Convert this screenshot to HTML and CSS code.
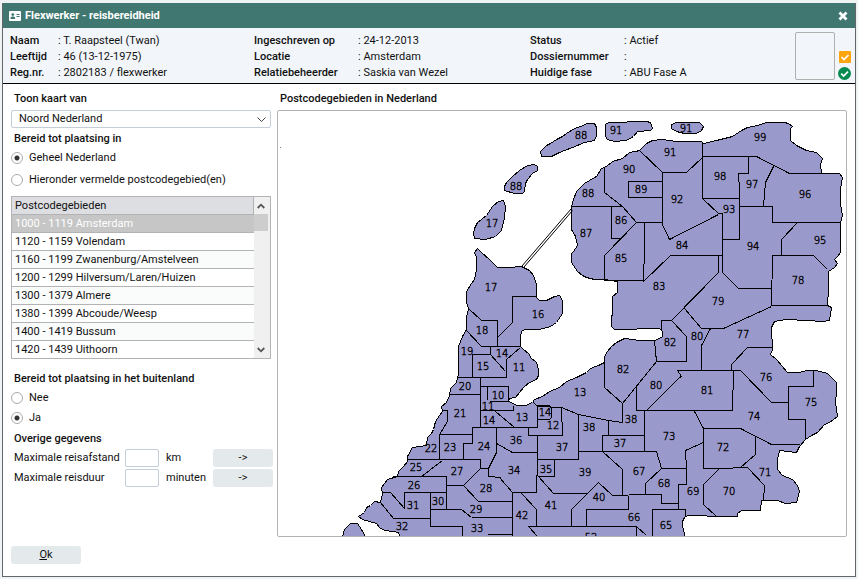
FILE: index.html
```html
<!DOCTYPE html>
<html lang="nl">
<head>
<meta charset="utf-8">
<title>Flexwerker - reisbereidheid</title>
<link rel="stylesheet" href="styles.css">
</head>
<body>
<main class="window">
  <header class="titlebar">
    <svg class="card-icon" viewBox="0 0 12 10" width="12" height="10" aria-hidden="true">
      <rect width="12" height="10" rx="1" fill="#fff"/>
      <circle cx="3.8" cy="3.6" r="1.4" fill="#407871"/>
      <path d="M1.5 8V7q0-1.5 1.5-1.5h1.6q1.5 0 1.5 1.5v1zM7.5 3h3v1h-3zM7.5 5h3v1h-3z" fill="#407871"/>
    </svg>
    <h1>Flexwerker - reisbereidheid</h1>
    <button class="close" type="button" aria-label="Sluiten">
      <svg viewBox="0 0 10 10" width="10" height="10"><path d="M1.5 1.5l7 7M8.5 1.5l-7 7" stroke="#fff" stroke-width="2.8"/></svg>
    </button>
  </header>

  <section class="summary">
    <dl class="facts facts-person">
      <dt>Naam</dt><dd>: T. Raapsteel (Twan)</dd>
      <dt>Leeftijd</dt><dd>: 46 (13-12-1975)</dd>
      <dt>Reg.nr.</dt><dd>: 2802183 / flexwerker</dd>
    </dl>
    <dl class="facts facts-office">
      <dt>Ingeschreven op</dt><dd>: 24-12-2013</dd>
      <dt>Locatie</dt><dd>: Amsterdam</dd>
      <dt>Relatiebeheerder</dt><dd>: Saskia van Wezel</dd>
    </dl>
    <dl class="facts facts-status">
      <dt>Status</dt><dd>: Actief</dd>
      <dt>Dossiernummer</dt><dd>:</dd>
      <dt>Huidige fase</dt><dd>: ABU Fase A</dd>
    </dl>
    <div class="photo"></div>
    <div class="badges">
      <svg viewBox="0 0 12 12" width="12" height="12"><rect width="12" height="12" rx="1" fill="#fda50f"/><path d="M2.5 6l2.500 2.500 4.500-4.500" fill="none" stroke="#fff" stroke-width="1.6"/></svg>
      <svg viewBox="0 0 13 13" width="13" height="13"><circle cx="6.5" cy="6.5" r="6.5" fill="#088a50"/><path d="M3.2 6.600l2.400 2.400 4.400-4.400" fill="none" stroke="#fff" stroke-width="1.7"/></svg>
    </div>
  </section>

  <div class="content">
    <form class="panel">
      <label class="heading" for="kaart">Toon kaart van</label>
      <div class="select-wrap">
        <select id="kaart"><option>Noord Nederland</option></select>
        <svg class="chevron" viewBox="0 0 9 6" width="9" height="6" aria-hidden="true"><path d="M.5 .5l4 4 4-4" fill="none" stroke="#444"/></svg>
      </div>

      <div class="group" role="radiogroup" aria-labelledby="binnenland">
        <h2 class="heading" id="binnenland">Bereid tot plaatsing in</h2>
        <label class="choice"><input type="radio" name="gebied" checked>Geheel Nederland</label>
        <label class="choice choice-area"><input type="radio" name="gebied">Hieronder vermelde postcodegebied(en)</label>
      </div>

      <div class="list">
        <table>
          <thead><tr><th>Postcodegebieden</th></tr></thead>
          <tbody>
            <tr class="selected"><td>1000 - 1119 Amsterdam</td></tr>
            <tr><td>1120 - 1159 Volendam</td></tr>
            <tr><td>1160 - 1199 Zwanenburg/Amstelveen</td></tr>
            <tr><td>1200 - 1299 Hilversum/Laren/Huizen</td></tr>
            <tr><td>1300 - 1379 Almere</td></tr>
            <tr><td>1380 - 1399 Abcoude/Weesp</td></tr>
            <tr><td>1400 - 1419 Bussum</td></tr>
            <tr><td>1420 - 1439 Uithoorn</td></tr>
          </tbody>
        </table>
        <div class="scrollbar">
          <button type="button" aria-label="Omhoog"><svg viewBox="0 0 8 6" width="8" height="6"><path d="M.7 5L4 1.700 7.300 5" fill="none" stroke="#555" stroke-width="1.8"/></svg></button>
          <div class="thumb"></div>
          <button type="button" aria-label="Omlaag"><svg viewBox="0 0 8 6" width="8" height="6"><path d="M.7 1L4 4.300 7.300 1" fill="none" stroke="#555" stroke-width="1.8"/></svg></button>
        </div>
      </div>

      <div class="group" role="radiogroup" aria-labelledby="buitenland">
        <h2 class="heading" id="buitenland">Bereid tot plaatsing in het buitenland</h2>
        <label class="choice"><input type="radio" name="buitenland">Nee</label>
        <label class="choice"><input type="radio" name="buitenland" checked>Ja</label>
      </div>

      <h2 class="heading">Overige gegevens</h2>
      <div class="limit">
        <label for="afstand">Maximale reisafstand</label>
        <input id="afstand" type="text">
        <span>km</span>
        <button class="button" type="button">-&gt;</button>
      </div>
      <div class="limit">
        <label for="duur">Maximale reisduur</label>
        <input id="duur" type="text">
        <span>minuten</span>
        <button class="button" type="button">-&gt;</button>
      </div>
      <button class="button ok" type="button"><u>O</u>k</button>
    </form>

    <section class="map-panel">
      <h2 class="heading">Postcodegebieden in Nederland</h2>
      <div class="map">
        <svg viewBox="278 111 568 425" role="img" aria-label="Postcodegebieden in Nederland">
          <rect x="280" y="147" width="1" height="1" fill="#888"/>
          <g transform="translate(-.5 -.5)">
          <g class="land">
            <!-- islands -->
            <path d="M541 152L547 146L551 144L557 140L563 137L567 134L575 129L581 127L588 124L595 124L597 128L597 136L595 141L585 143L573 148L560 153L552 157L542 157Z"/>
            <path d="M606 125L609 123L620 123L635 122L647 122L651 123L653 129L651 131L638 132L634 137L627 141L615 142L608 140L606 137Z"/>
            <path d="M672 125L677 123L687 123L700 123L704 127L702 131L697 134L685 134L677 132L672 129Z"/>
            <path d="M505 187L507 183L513 177L520 171L528 166L535 165L538 167L538 171L533 174L528 180L526 184L525 192L523 194L515 194L505 191Z"/>
            <path d="M475 229L478 223L487 216L493 207L499 202L504 201L506 207L505 218L502 231L496 237L486 240L475 239L474 234Z"/>
            <path d="M343 537L345 530L351 524L358 524L362 530L366 537"/>
            <!-- mainland -->
            <path d="M475 253L478 249L482 253L490 260L498 268L510 268L522 267L530 271L534 276L537 285L537 298L540 301L547 301L555 297L560 296L563 301L563 314L557 323L551 327L540 330L525 330L522 332L521 337L521 347L523 349L530 355L531 358L537 363L539 370L539 376L537 380L530 383L525 387L520 393L516 398L510 399L509 402L514 404L517 406L526 406L533 403L535 400L543 397L550 392L560 388L567 382L577 378L587 373L590 370L593 368L599 366L605 363L605 357L608 352L612 347L617 343L621 341L625 339L633 340L640 341L655 341L660 339L663 337L663 332L660 329L615 330L612 327L612 317L613 315L613 297L618 293L618 282L605 280L595 280L587 278L583 276L578 272L572 263L572 254L574 252L578 246L576 237L572 230L572 207L574 200L577 192L585 184L590 181L597 177L602 169L607 167L613 162L623 159L630 153L636 152L640 151L647 144L653 141L663 140L677 142L702 142L704 144L717 141L733 137L742 131L748 128L758 126L767 123L785 123L789 124L793 127L791 129L791 141L797 146L807 151L817 153L823 159L821 165L822 174L840 174L843 178L841 190L841 205L843 216L841 223L841 253L838 257L835 260L838 264L835 268L829 272L829 290L828 306L832 308L830 321L823 322L807 321L787 320L775 322L772 328L773 350L771 355L777 360L788 373L800 373L807 371L817 371L828 374L837 383L837 392L836 403L838 417L830 423L825 425L818 433L812 436L806 440L800 447L797 453L780 451L778 460L778 470L783 476L793 480L798 486L800 492L797 503L786 504L778 501L762 501L761 511L742 511L738 514L738 517L715 517L700 516L688 516L685 518L683 522L683 527L686 538L401 538L399 533L393 532L385 531L380 528L377 524L370 522L363 520L359 517L365 513L367 508L371 506L375 502L381 503L383 495L382 488L388 480L398 477L399 472L404 467L408 462L408 457L413 448L420 447L427 446L428 438L432 434L434 430L436 422L440 416L443 412L442 407L447 403L450 396L451 389L457 383L459 375L459 347L463 337L467 330L467 318L469 309L467 303L467 292L472 284L475 280L477 270L477 258Z"/>
          </g>
          <!-- causeway -->
          <path class="causeway" d="M571.5 209.500L522.500 266.500M573 211L524.500 267.500"/>
          <!-- district borders, north -->
          <path class="line" d="M605 168V193L623 207L637 223H663M572 207H623M612 207V239H622M637 223L605 256V281H644M645 223V250L644 281M640 151L663 173H687L703 158M703 143V199L719 214H723M663 182H629V198H663M663 173V225L670 240L719 215M703 157H757L790 174H822M749 157V174H739L740 191V240H723M703 199H740M774 167L766 183L764 207M740 207H773V223H841M798 223L782 240V256M828 270L814 256H773L772 306H829M723 214V273L739 289H772M723 256H671L644 282M719 256V273L672 321H662V330"/>
          <!-- east -->
          <path class="line" d="M672 321L687 337V362H657L655 341M657 362L623 404M685 309L702 329H724L772 307M711 329L702 346V371M741 371H678L682 377L680 378L647 411M732 371V365L748 348H773M741 371L772 403H789M814 371V387H789V420H806V440M734 371L733 411H637V385M605 363V388L623 404V423L609 421L579 415L562 408L538 407L534 403M695 412L704 429V469H720L748 468L765 486L764 501M704 429H741L772 445H800M756 437V455L741 468M720 469L704 485V505L717 517M704 443L686 451L687 469V485H679V510M653 537V510H686V516M645 411V452M579 452H657L662 469H687M662 469L646 484V495M613 496L646 495H662V504H678M603 452L623 470V496"/>
          <!-- centre -->
          <path class="line" d="M613 496L599 483L572 510V527M539 477L554 494H588M629 496V510H587V527M538 537L529 527H637V537M637 527L647 536M538 405V428M538 406H550L552 408V418L550 420H538M562 408L563 436H529V428M538 436V460L537 493M538 460H579V415M555 460V477H538M645 436H603V452M609 421V436M500 478L513 493H537M513 493V537M522 494L537 510V527M514 406V411H481M481 378V428M481 387H509V402H490M488 387V400M496 412L515 428M464 460V444H473V428H538M497 428V453L489 469V477L502 478M497 444L513 453H538M473 435V444M440 460V435H473M440 435L448 422V411H443M450 395H481M408 460H481V469H489M443 461L422 477M393 477H447V510M447 486H464L481 469M464 486L479 502H513M472 518H513"/>
          <!-- west -->
          <path class="line" d="M383 493H391L405 509V493H447M431 493V527H463V537M431 510H462L472 518M381 503L394 519H431M537 297H513V323L498 338M469 309L482 321H498V347M467 331L482 347H521M491 347V355H473V378M458 378H507V360L521 348M491 355L506 372M488 535H513"/>
          </g>
          <g class="codes">
            <text x="581" y="139">88</text><text x="616" y="134">91</text><text x="686" y="132">91</text><text x="760" y="141">99</text><text x="670" y="156">91</text><text x="629" y="173">90</text><text x="641" y="193">89</text><text x="516" y="190">88</text><text x="588" y="197">88</text><text x="720" y="180">98</text><text x="752" y="188">97</text><text x="805" y="198">96</text><text x="677" y="203">92</text><text x="729" y="213">93</text><text x="492" y="227">17</text><text x="586" y="237">87</text><text x="621" y="224">86</text><text x="682" y="249">84</text><text x="753" y="250">94</text><text x="820" y="244">95</text><text x="621" y="262">85</text><text x="659" y="290">83</text><text x="718" y="305">79</text><text x="798" y="284">78</text><text x="491" y="291">17</text><text x="538" y="318">16</text><text x="482" y="334">18</text><text x="670" y="346">82</text><text x="697" y="340">80</text><text x="743" y="338">77</text><text x="467" y="355">19</text><text x="502" y="357">14</text><text x="483" y="370">15</text><text x="519" y="371">11</text><text x="623" y="373">82</text><text x="656" y="389">80</text><text x="707" y="394">81</text><text x="766" y="381">76</text><text x="811" y="406">75</text><text x="465" y="390">20</text><text x="498" y="399">10</text><text x="488" y="410">11</text><text x="580" y="396">13</text><text x="460" y="417">21</text><text x="489" y="424">14</text><text x="522" y="421">13</text><text x="545" y="416">14</text><text x="553" y="429">12</text><text x="589" y="431">38</text><text x="631" y="423">38</text><text x="754" y="420">74</text><text x="431" y="452">22</text><text x="450" y="451">23</text><text x="484" y="450">24</text><text x="516" y="444">36</text><text x="562" y="451">37</text><text x="620" y="447">37</text><text x="669" y="440">73</text><text x="723" y="451">72</text><text x="416" y="471">25</text><text x="457" y="475">27</text><text x="514" y="474">34</text><text x="546" y="473">35</text><text x="585" y="476">39</text><text x="639" y="475">67</text><text x="664" y="487">68</text><text x="765" y="476">71</text><text x="414" y="489">26</text><text x="486" y="492">28</text><text x="438" y="505">30</text><text x="413" y="509">31</text><text x="476" y="513">29</text><text x="599" y="501">40</text><text x="551" y="509">41</text><text x="634" y="521">66</text><text x="666" y="529">65</text><text x="693" y="495">69</text><text x="729" y="495">70</text><text x="402" y="530">32</text><text x="477" y="532">33</text><text x="522" y="519">42</text><text x="591" y="541">52</text>
          </g>
        </svg>
      </div>
    </section>
  </div>
</main>
</body>
</html>
```
FILE: styles.css
```css
* { box-sizing: border-box; }

body {
  margin: 0;
  padding: 3px 2px;
  background: #f0f3f4;
  color: #111;
  font: 11px/16px Roboto, "Liberation Sans", sans-serif;
}

h1, h2, dl, dd { margin: 0; }
button, input, select { font: inherit; color: inherit; }
svg { display: block; }

.window {
  border: 1px solid #63666a;
  border-top: 0;
  background: #fff;
}

.titlebar {
  display: flex;
  align-items: center;
  gap: 4px;
  height: 25px;
  padding: 0 7px 0 6px;
  background: #407871;
  color: #fff;
}
.titlebar h1 { flex: 1; font-size: 11px; font-weight: 700; }
.close { padding: 0; border: 0; background: none; }

.summary {
  display: flex;
  align-items: flex-start;
  padding: 4px 4px 3px 7px;
  border-bottom: 1px solid #000;
  background: #f2f6fa;
}
.facts { display: grid; padding-top: 1px; margin-bottom: -1px; }
.facts dt { font-weight: 500; }
.facts-person { grid-template-columns: 48px 196px; }
.facts-office { grid-template-columns: 104px 172px; }
.facts-status { grid-template-columns: 94px 1fr; flex: 1; }
.photo {
  width: 40px;
  height: 48px;
  border: 1px solid #b0b0b0;
  border-radius: 2px;
}
.badges {
  display: grid;
  gap: 4px;
  justify-items: center;
  align-self: flex-end;
  margin-left: 3px;
}

.content {
  display: grid;
  grid-template-columns: 262px minmax(0, 1fr);
  gap: 4px;
  padding: 4px 8px 12px;
}
.heading {
  display: block;
  padding: 2px 0 0 3px;
  font-size: 11px;
  font-weight: 500;
  line-height: 18px;
}

.select-wrap { position: relative; margin: 2px 2px 0 0; }
.select-wrap select {
  display: block;
  width: 100%;
  height: 18px;
  padding: 0 7px;
  border: 1px solid #c3ced8;
  border-radius: 2px;
  background: #fff;
  appearance: none;
}
.chevron { position: absolute; right: 5px; top: 7px; pointer-events: none; }

.choice {
  display: flex;
  align-items: center;
  gap: 6px;
  height: 20px;
}
.choice-area { margin-top: 2px; }
.choice input {
  width: 12px;
  height: 12px;
  margin: 0;
  border: 1px solid #aaa;
  border-radius: 50%;
  background: #fff;
  appearance: none;
}
.choice input:checked { background: radial-gradient(circle, #333 0 2px, #fff 3px); }

.list {
  display: flex;
  margin: 6px 2px 9px 0;
  border: 1px solid #b3b3b5;
}
.list table { flex: 1; border-collapse: separate; border-spacing: 0; }
.list th, .list td {
  height: 18px;
  padding: 0 3px;
  border-bottom: 1px solid #b3b3b5;
  font-weight: 400;
  line-height: 17px;
  text-align: left;
}
.list th { border-right: 1px solid #b3b3b5; background: #dddee2; }
.list tr:nth-child(odd) td { background: #fafcfc; }
.list tr:last-child td { height: 17px; border-bottom: 0; }
.list tbody tr.selected td { background: #c6c6c6; color: #fff; }
.scrollbar {
  display: flex;
  flex-direction: column;
  width: 16px;
  background: #f0f0f0;
}
.scrollbar button {
  display: grid;
  place-items: center;
  width: 14px;
  height: 17px;
  padding: 0;
  border: 0;
  background: none;
}
.scrollbar .thumb { width: 14px; height: 17px; margin-bottom: auto; background: #cdcdcd; }

.limit {
  display: grid;
  grid-template-columns: 111px 34px 47px 1fr;
  align-items: center;
  height: 20px;
  padding-left: 3px;
}
.limit label { white-space: nowrap; }
.limit input {
  width: 34px;
  height: 18px;
  padding: 0 3px;
  border: 1px solid #c3ced8;
  border-radius: 2px;
}
.limit span { padding-left: 7px; }
.limit .button { margin-left: 7px; }

.button {
  height: 18px;
  padding: 0;
  border: 0;
  border-radius: 3px;
  background: #e4e9ec;
  line-height: 16px;
}
.ok { width: 70px; margin-top: 58px; }

.map {
  margin-top: 2px;
  border: 1px solid #b3b3b5;
  border-radius: 2px;
}
.map svg { width: 100%; height: auto; }
.land { fill: #9a99cb; stroke: #000; shape-rendering: crispEdges; }
.line { fill: none; stroke: #000; shape-rendering: crispEdges; }
.causeway { fill: none; stroke: #000; }
.codes {
  fill: #000;
  stroke: #000;
  stroke-width: .4px;
  font: 200 10px "DejaVu Sans", "DejaVu Sans Light", sans-serif;
  text-anchor: middle;
}
```
